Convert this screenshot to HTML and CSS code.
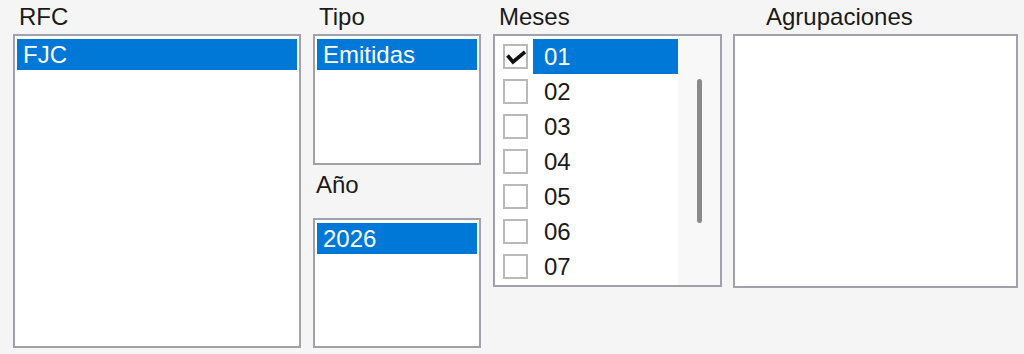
FILE: index.html
```html
<!DOCTYPE html>
<html lang="es">
  <head>
    <meta charset="UTF-8" />
    <title>Filtros</title>
    <link rel="stylesheet" href="styles.css">
  </head>
  <body>
    <div class="form">
      <div class="col col-rfc">
        <div class="label">RFC</div>
        <div class="listbox rfc-box">
          <div class="item selected">FJC</div>
        </div>
      </div>

      <div class="col col-tipo">
        <div class="label">Tipo</div>
        <div class="listbox tipo-box">
          <div class="item selected">Emitidas</div>
        </div>
        <div class="label label-anio">Año</div>
        <div class="listbox anio-box">
          <div class="item selected">2026</div>
        </div>
      </div>

      <div class="col col-meses">
        <div class="label">Meses</div>
        <div class="checklist">
          <ul class="months">
            <li class="month">
              <span class="check checked">
                <svg viewBox="2 2 21 21" width="21" height="21"><polyline points="4.5,11.5 10,18 22,8" fill="none" stroke="#111" stroke-width="3.6" /></svg>
              </span>
              <span class="month-text selected">01</span>
            </li>
            <li class="month"><span class="check"></span><span class="month-text">02</span></li>
            <li class="month"><span class="check"></span><span class="month-text">03</span></li>
            <li class="month"><span class="check"></span><span class="month-text">04</span></li>
            <li class="month"><span class="check"></span><span class="month-text">05</span></li>
            <li class="month"><span class="check"></span><span class="month-text">06</span></li>
            <li class="month"><span class="check"></span><span class="month-text">07</span></li>
          </ul>
          <div class="scrollbar"><div class="thumb"></div></div>
        </div>
      </div>

      <div class="col col-agrup">
        <div class="label label-indent">Agrupaciones</div>
        <div class="listbox agrup-box"></div>
      </div>
    </div>
  </body>
</html>
```

FILE: styles.css
```css
html {
  background: #f5f5f5;
}
body {
  margin: 0;
  font-family: "Liberation Sans", Arial, sans-serif;
  font-size: 24px;
  color: #1a1a1a;
}
.form {
  display: flex;
  padding-left: 13px;
}
.col {
  display: flex;
  flex-direction: column;
}
.col-rfc {
  width: 288px;
  margin-right: 12px;
}
.col-tipo {
  width: 168px;
  margin-right: 12px;
}
.col-meses {
  width: 229px;
  margin-right: 11px;
}
.col-agrup {
  width: 285px;
}
.label {
  height: 34px;
  line-height: 34px;
  padding-left: 6px;
}
.label-anio {
  height: 53px;
  padding-top: 3px;
  box-sizing: border-box;
  padding-left: 3px;
}
.label-indent {
  padding-left: 33px;
}
.listbox {
  box-sizing: border-box;
  background: white;
  border: 2px solid #a0a1aa;
  padding: 3px 2px;
}
.rfc-box {
  height: 314px;
}
.tipo-box {
  height: 131px;
}
.anio-box {
  height: 130px;
}
.agrup-box {
  height: 254px;
}
.item {
  height: 31px;
  line-height: 31px;
  padding-left: 6px;
}
.selected {
  background: #0078d7;
  color: white;
}
.checklist {
  box-sizing: border-box;
  height: 253px;
  display: flex;
  background: white;
  border: 2px solid #a0a1aa;
}
.months {
  list-style: none;
  margin: 0;
  padding: 3px 0 0 0;
  flex: 1;
}
.month {
  display: flex;
  align-items: center;
  height: 35px;
}
.check {
  box-sizing: border-box;
  width: 25px;
  height: 25px;
  margin-left: 8px;
  margin-right: 5px;
  border: 2px solid #b9b9b9;
  display: flex;
  background: white;
}
.month-text {
  flex: 1;
  height: 35px;
  line-height: 36px;
  padding-left: 11px;
}
.scrollbar {
  width: 42px;
  background: #f8f8f8;
  position: relative;
}
.thumb {
  position: absolute;
  left: 19px;
  top: 43px;
  width: 5px;
  height: 144px;
  border-radius: 3px;
  background: #8a8a8a;
}
```
